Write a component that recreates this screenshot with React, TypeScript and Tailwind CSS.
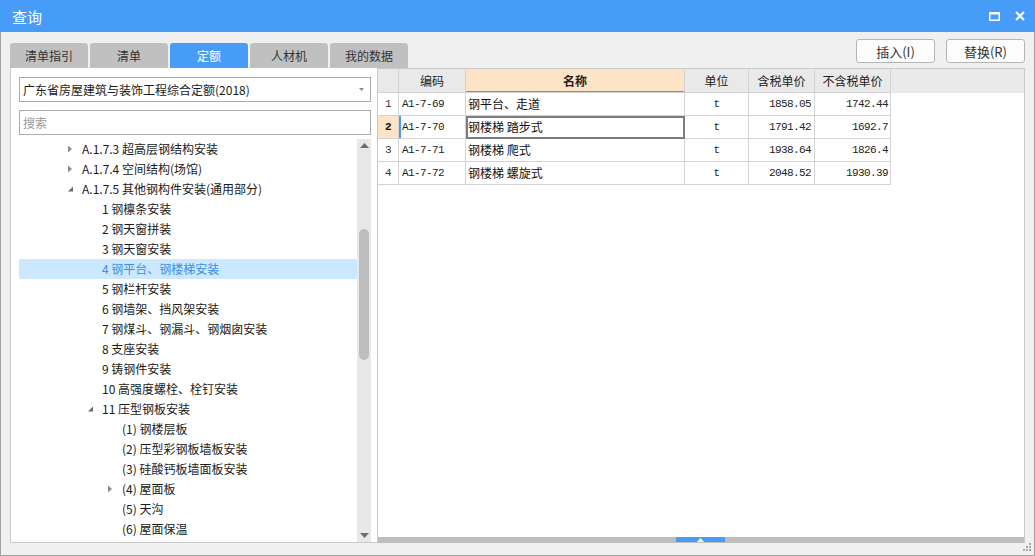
import React from 'react'

type TreeRow = { label: string; level: 0 | 1 | 2; icon?: 'open' | 'closed'; selected?: boolean }

const tree: TreeRow[] = [
  { label: 'A.1.7.3 超高层钢结构安装', level: 0, icon: 'closed' },
  { label: 'A.1.7.4 空间结构(场馆)', level: 0, icon: 'closed' },
  { label: 'A.1.7.5 其他钢构件安装(通用部分)', level: 0, icon: 'open' },
  { label: '1 钢檩条安装', level: 1 },
  { label: '2 钢天窗拼装', level: 1 },
  { label: '3 钢天窗安装', level: 1 },
  { label: '4 钢平台、钢楼梯安装', level: 1, selected: true },
  { label: '5 钢栏杆安装', level: 1 },
  { label: '6 钢墙架、挡风架安装', level: 1 },
  { label: '7 钢煤斗、钢漏斗、钢烟囱安装', level: 1 },
  { label: '8 支座安装', level: 1 },
  { label: '9 铸钢件安装', level: 1 },
  { label: '10 高强度螺栓、栓钉安装', level: 1 },
  { label: '11 压型钢板安装', level: 1, icon: 'open' },
  { label: '(1) 钢楼层板', level: 2 },
  { label: '(2) 压型彩钢板墙板安装', level: 2 },
  { label: '(3) 硅酸钙板墙面板安装', level: 2 },
  { label: '(4) 屋面板', level: 2, icon: 'closed' },
  { label: '(5) 天沟', level: 2 },
  { label: '(6) 屋面保温', level: 2 },
]

const indent = ['pl-[48px]', 'pl-[68px]', 'pl-[88px]']

const rows = [
  ['1', 'A1-7-69', '钢平台、走道', 't', '1858.05', '1742.44'],
  ['2', 'A1-7-70', '钢楼梯 踏步式', 't', '1791.42', '1692.7'],
  ['3', 'A1-7-71', '钢楼梯 爬式', 't', '1938.64', '1826.4'],
  ['4', 'A1-7-72', '钢楼梯 螺旋式', 't', '2048.52', '1930.39'],
]

const tabs = ['清单指引', '清单', '定额', '人材机', '我的数据']

const mono = "font-['Liberation_Mono',monospace] text-[11px] tracking-[-0.6px]"

function TreeIcon({ kind }: { kind?: 'open' | 'closed' }) {
  if (kind === 'closed')
    return (
      <svg width="15" height="20" viewBox="0 0 15 20">
        <path d="M1 6.5 L5 10 L1 13.5 Z" fill="#8c8c8c" />
      </svg>
    )
  if (kind === 'open')
    return (
      <svg width="15" height="20" viewBox="0 0 15 20">
        <path d="M6 7.5 L6 12.5 L1 12.5 Z" fill="#6b6b6b" />
      </svg>
    )
  return <span className="w-[15px] shrink-0" />
}

export default function App() {
  return (
    <div className="w-[1035px] h-[556px] flex flex-col bg-[#f0f0f0] font-['Noto_Sans_CJK_SC',sans-serif] text-[12px] text-[#222] relative overflow-hidden">
      {/* title bar */}
      <div className="h-[32px] shrink-0 bg-[#479cf8] flex items-center pl-[12px] pr-[10px] text-white">
        <span className="text-[15px] leading-none">查询</span>
        <div className="ml-auto flex items-center gap-[15px]">
          <svg width="11" height="9" viewBox="0 0 11 9">
            <rect x="0.75" y="1" width="9.5" height="7.25" fill="none" stroke="#fff" strokeWidth="1.5" />
            <rect x="0" y="0" width="11" height="2.5" fill="#fff" />
          </svg>
          <svg width="10" height="10" viewBox="0 0 10 10">
            <path d="M1 1 L9 9 M9 1 L1 9" stroke="#fff" strokeWidth="2" />
          </svg>
        </div>
      </div>

      <div className="flex-1 flex flex-col px-[9px] pb-[12px] border-x border-b border-[#a3a3a3]">
        {/* tabs and buttons */}
        <div className="h-[36px] shrink-0 flex items-start justify-between">
          <div className="mt-[11px] flex gap-[2px]">
            {tabs.map((t) => (
              <div
                key={t}
                className={
                  t === '定额'
                    ? 'w-[78px] h-[25px] rounded-t-[3px] bg-[#479cf8] text-white flex items-center justify-center leading-none'
                    : 'w-[78px] h-[25px] rounded-t-[3px] bg-[#c0c0c0] text-[#333] flex items-center justify-center leading-none'
                }
              >
                {t}
              </div>
            ))}
          </div>
          <div className="mt-[7px] flex gap-[11px]">
            <button className="w-[79px] h-[24px] bg-[#fdfdfd] border border-[#b5b5b5] rounded-[3px] text-[13px] text-[#333] leading-none">
              插入(I)
            </button>
            <button className="w-[79px] h-[24px] bg-[#fdfdfd] border border-[#b5b5b5] rounded-[3px] text-[13px] text-[#333] leading-none">
              替换(R)
            </button>
          </div>
        </div>

        {/* panels */}
        <div className="flex h-[475px]">
          {/* left */}
          <div className="w-[367px] shrink-0 bg-white border-l border-b border-[#c9c9c9] flex flex-col pl-[8px] pr-[6px] pt-[9px]">
            <div className="h-[25px] shrink-0 border border-[#ababab] flex items-center pl-[3px] pr-[6px]">
              <span className="leading-none text-[#1a1a1a]">广东省房屋建筑与装饰工程综合定额(2018)</span>
              <svg className="ml-auto" width="5" height="3" viewBox="0 0 5 3">
                <path d="M0 0 L5 0 L2.5 3 Z" fill="#8a8a8a" />
              </svg>
            </div>
            <div className="h-[25px] mt-[8px] shrink-0 border border-[#ababab] flex items-center pl-[3px]">
              <span className="leading-none text-[#9a9a9a]">搜索</span>
            </div>
            <div className="mt-[4px] flex-1 flex min-h-0">
              <div className="flex-1 overflow-hidden">
                {tree.map((r) => (
                  <div
                    key={r.label}
                    className={`h-[20px] flex items-center ${indent[r.level]} ${r.selected ? 'bg-[#cce8ff] text-[#3a8ee6]' : 'text-[#1a1a1a]'}`}
                  >
                    <TreeIcon kind={r.icon} />
                    <span className="leading-[20px] whitespace-nowrap">{r.label}</span>
                  </div>
                ))}
              </div>
              <div className="w-[14px] shrink-0 bg-[#e8e8e8] flex flex-col items-center">
                <svg className="mt-[4px]" width="9" height="5" viewBox="0 0 9 5">
                  <path d="M0 5 L9 5 L4.5 0 Z" fill="#6f6f6f" />
                </svg>
                <div className="mt-[81px] w-[10px] h-[131px] rounded-[5px] bg-[#bdbdbd]" />
                <svg className="mt-auto mb-[4px]" width="9" height="5" viewBox="0 0 9 5">
                  <path d="M0 0 L9 0 L4.5 5 Z" fill="#6f6f6f" />
                </svg>
              </div>
            </div>
          </div>

          {/* right */}
          <div className="flex-1 bg-white border-t border-l border-r border-[#c9c9c9] flex flex-col">
            <div className="flex flex-col">
              <div className="flex h-[24px] bg-[#e9e9e9]">
                <div className="w-[21px] border-r border-b border-[#d3d3d3]" />
                <div className="w-[67px] border-r border-b border-[#d3d3d3] flex items-center justify-center">编码</div>
                <div className="w-[219px] border-r border-b border-[#d3d3d3] bg-[#fde4c6] shadow-[inset_0_-1px_0_#479cf8] flex items-center justify-center font-bold">名称</div>
                <div className="w-[64px] border-r border-b border-[#d3d3d3] flex items-center justify-center">单位</div>
                <div className="w-[66px] border-r border-b border-[#d3d3d3] flex items-center justify-center">含税单价</div>
                <div className="w-[76px] border-r border-b border-[#d3d3d3] flex items-center justify-center">不含税单价</div>
              </div>
              {rows.map((r) => {
                const active = r[0] === '2'
                return (
                  <div key={r[0]} className="flex h-[23px]">
                    <div className={`w-[21px] border-r border-b border-[#d3d3d3] flex items-center justify-center ${mono} ${active ? 'bg-[#fde4c6] font-bold text-[#111]' : 'text-[#333]'}`}>
                      {r[0]}
                    </div>
                    <div className={`w-[67px] border-r border-b border-[#d3d3d3] flex items-center pl-[3px] ${mono} ${active ? 'shadow-[inset_2px_0_0_#479cf8]' : ''}`}>
                      {r[1]}
                    </div>
                    <div className={`w-[219px] border-r border-b border-[#d3d3d3] flex items-center pl-[2px] text-[#111] ${active ? 'outline-2 outline-[#7d7d7d] -outline-offset-2' : ''}`}>
                      {r[2]}
                    </div>
                    <div className={`w-[64px] border-r border-b border-[#d3d3d3] flex items-center justify-center ${mono}`}>{r[3]}</div>
                    <div className={`w-[66px] border-r border-b border-[#d3d3d3] flex items-center justify-end pr-[3px] ${mono}`}>{r[4]}</div>
                    <div className={`w-[76px] border-r border-b border-[#d3d3d3] flex items-center justify-end pr-[2px] ${mono}`}>{r[5]}</div>
                  </div>
                )
              })}
            </div>
            <div className="flex-1" />
            <div className="h-[6px] shrink-0 bg-[#bdbdbd] flex">
              <div className="ml-[298px] w-[49px] h-[5px] bg-[#479cf8] flex items-center justify-center">
                <svg width="7" height="4" viewBox="0 0 7 4">
                  <path d="M0 4 L7 4 L3.5 0 Z" fill="#fff" />
                </svg>
              </div>
            </div>
          </div>
        </div>
      </div>

      {/* resize grip */}
      <svg className="absolute right-[3px] bottom-[3px]" width="10" height="10" viewBox="0 0 10 10">
        <rect x="7" y="0" width="2" height="2" fill="#a8a8a8" />
        <rect x="4" y="3" width="2" height="2" fill="#a8a8a8" />
        <rect x="7" y="3" width="2" height="2" fill="#a8a8a8" />
        <rect x="1" y="6" width="2" height="2" fill="#a8a8a8" />
        <rect x="4" y="6" width="2" height="2" fill="#a8a8a8" />
        <rect x="7" y="6" width="2" height="2" fill="#a8a8a8" />
      </svg>
    </div>
  )
}
